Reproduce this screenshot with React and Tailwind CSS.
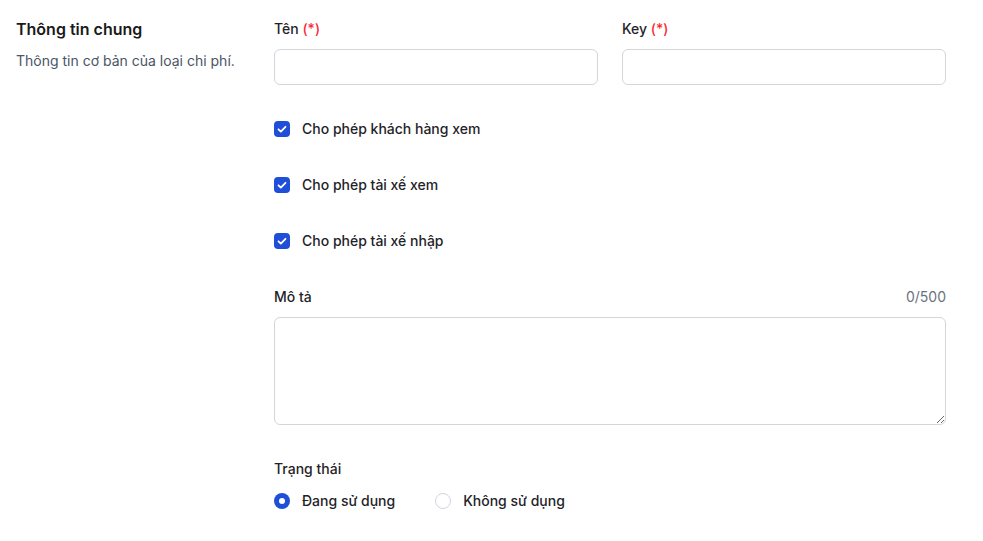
import React, { useState } from 'react';

const font = { fontFamily: 'Inter, "Noto Sans", sans-serif' };

const Checkbox = ({ label, checked, onChange }) => (
    <label className="flex items-center gap-3 h-5 cursor-pointer">
        <span
            className={`w-4 h-4 rounded flex items-center justify-center ${
                checked ? 'bg-[#1f4fd8]' : 'bg-white border border-gray-300'
            }`}
        >
            {checked && (
                <svg viewBox="0 0 16 16" className="w-4 h-4" fill="none">
                    <path d="M4.5 8.3l2.3 2.3L11.5 5.8" stroke="white" strokeWidth="1.8" strokeLinecap="round" strokeLinejoin="round" />
                </svg>
            )}
        </span>
        <input type="checkbox" checked={checked} onChange={onChange} className="sr-only" />
        <span className="text-sm font-medium text-[#1f2328]">{label}</span>
    </label>
);

const Radio = ({ label, checked, onChange }) => (
    <label className="flex items-center gap-3 h-5 cursor-pointer">
        <span
            className={`w-4 h-4 rounded-full flex items-center justify-center ${
                checked ? 'bg-[#1f4fd8]' : 'bg-white border border-gray-300'
            }`}
        >
            {checked && <span className="w-1.5 h-1.5 rounded-full bg-white" />}
        </span>
        <input type="radio" checked={checked} onChange={onChange} className="sr-only" />
        <span className="text-sm font-medium text-[#1f2328]">{label}</span>
    </label>
);

export default function App() {
    const [name, setName] = useState('');
    const [key, setKey] = useState('');
    const [desc, setDesc] = useState('');
    const [perms, setPerms] = useState({ customer: true, driverView: true, driverInput: true });
    const [status, setStatus] = useState('active');

    const toggle = (k) => setPerms({ ...perms, [k]: !perms[k] });

    return (
        <div className="bg-white min-h-screen" style={font}>
            <div className="flex gap-6 pl-4 pt-[19px] pb-8">
                {/* Left: section info */}
                <div className="w-[234px] shrink-0">
                    <h2 className="text-base font-semibold leading-5 text-[#1a1a1a]">Thông tin chung</h2>
                    <p className="mt-3 text-sm text-gray-600 leading-5">Thông tin cơ bản của loại chi phí.</p>
                </div>

                {/* Right: form */}
                <div className="w-[672px]">
                    <div className="grid grid-cols-2 gap-6">
                        <div>
                            <label className="block text-sm font-medium leading-5 text-[#1f2328] mb-[10px]">
                                Tên <span className="text-red-500">(*)</span>
                            </label>
                            <input
                                value={name}
                                onChange={(e) => setName(e.target.value)}
                                className="w-full h-9 px-3 text-sm border border-gray-300 rounded-md focus:outline-none"
                            />
                        </div>
                        <div>
                            <label className="block text-sm font-medium leading-5 text-[#1f2328] mb-[10px]">
                                Key <span className="text-red-500">(*)</span>
                            </label>
                            <input
                                value={key}
                                onChange={(e) => setKey(e.target.value)}
                                className="w-full h-9 px-3 text-sm border border-gray-300 rounded-md focus:outline-none"
                            />
                        </div>
                    </div>

                    <div className="mt-[34px] flex flex-col gap-9">
                        <Checkbox label="Cho phép khách hàng xem" checked={perms.customer} onChange={() => toggle('customer')} />
                        <Checkbox label="Cho phép tài xế xem" checked={perms.driverView} onChange={() => toggle('driverView')} />
                        <Checkbox label="Cho phép tài xế nhập" checked={perms.driverInput} onChange={() => toggle('driverInput')} />
                    </div>

                    <div className="mt-9">
                        <div className="flex justify-between items-center mb-[10px] leading-5">
                            <label className="text-sm font-medium text-[#1f2328]">Mô tả</label>
                            <span className="text-sm text-gray-500">{desc.length}/500</span>
                        </div>
                        <textarea
                            value={desc}
                            maxLength={500}
                            onChange={(e) => setDesc(e.target.value)}
                            className="block w-full h-[108px] px-3 py-2 text-sm border border-gray-300 rounded-md focus:outline-none"
                        />
                    </div>

                    <div className="mt-[34px]">
                        <label className="block text-sm font-medium leading-5 text-[#1f2328]">Trạng thái</label>
                        <div className="mt-3 flex gap-10">
                            <Radio label="Đang sử dụng" checked={status === 'active'} onChange={() => setStatus('active')} />
                            <Radio label="Không sử dụng" checked={status === 'inactive'} onChange={() => setStatus('inactive')} />
                        </div>
                    </div>
                </div>
            </div>
        </div>
    );
}
